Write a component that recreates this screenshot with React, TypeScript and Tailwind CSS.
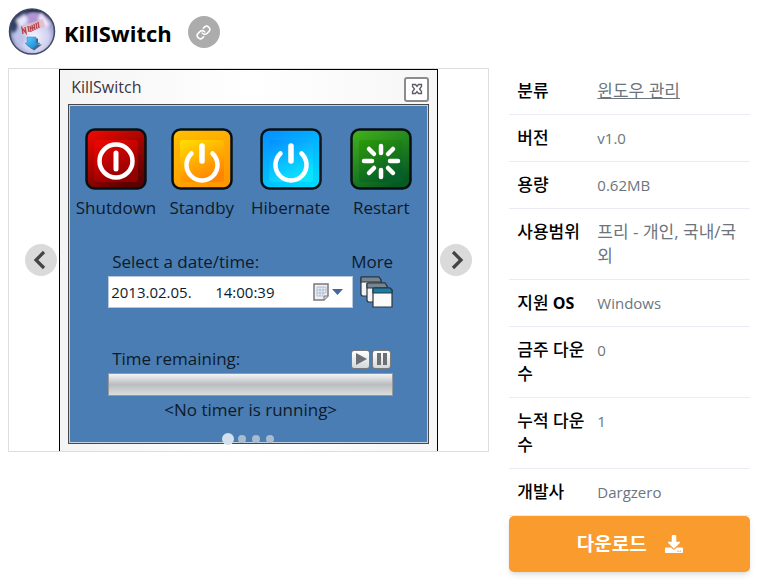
import type { ReactNode } from "react";
import { FaDownload } from "react-icons/fa";
import { Link } from "lucide-react";

const details = [
  { label: "분류", value: "윈도우 관리", href: "#" },
  { label: "버전", value: "v1.0" },
  { label: "용량", value: "0.62MB" },
  { label: "사용범위", value: "프리 - 개인, 국내/국외", korean: true },
  { label: "지원", suffix: "OS", value: "Windows" },
  { label: "금주 다운수", value: "0" },
  { label: "누적 다운수", value: "1" },
  { label: "개발사", value: "Dargzero" },
];

const AppLogo = () => (
  <svg viewBox="0 0 48 48" className="size-12 shrink-0" role="img" aria-label="KillSwitch logo">
    <defs>
      <radialGradient id="ball" cx="55%" cy="62%" r="58%">
        <stop offset="0" stopColor="#f4f3ff" />
        <stop offset="0.55" stopColor="#cfd0f0" />
        <stop offset="0.85" stopColor="#8990bb" />
        <stop offset="1" stopColor="#1d2a48" />
      </radialGradient>
      <linearGradient id="arrow" x1="0" y1="0" x2="1" y2="1">
        <stop offset="0" stopColor="#62d3ff" />
        <stop offset="1" stopColor="#0876cf" />
      </linearGradient>
      <filter id="soft">
        <feGaussianBlur stdDeviation="1.6" />
      </filter>
      <clipPath id="disc">
        <circle cx="24" cy="23.500" r="22" />
      </clipPath>
    </defs>
    <circle cx="24" cy="23.500" r="22.500" fill="url(#ball)" />
    <g clipPath="url(#disc)">
      <g filter="url(#soft)">
        <path d="M2 20C3 8 11 1 22 1l-5 7-7 9-4 10z" fill="#2f4169" />
        <path d="M20 6c8-4 19 2 22 10l-8-2-12 4-6-5z" fill="#b294d2" />
        <path d="M33 4l9 12-4 4-8-9z" fill="#f1e4ff" />
        <path d="M8 12l9-6 3 7-8 7z" fill="#e6e6fb" />
        <path d="M4 26l9-4 6 8-8 10z" fill="#bcc2ea" />
      </g>
    </g>
    <circle cx="24" cy="23.500" r="22.500" fill="none" stroke="#3f4963" strokeWidth="1.500" />
    <path d="M13 18l22-7 2 8-23 7z" fill="#e2bcc6" opacity="0.800" />
    <path
      d="M15 26l-1-6 4 5-1-6m4 5l-1-6m3 6l-1-6m3 5l-1-6m-1 3l4-1m0 3l-1-6m3 5l-1-6m3 5l-1-6"
      fill="none"
      stroke="#b5474f"
      strokeWidth="1.400"
    />
    <path d="M20 30h9v6h4l-8 6-8-6h3z" fill="#526178" transform="translate(1 0.500)" />
    <path d="M19 29h9v6h4l-8 6-7-6h2z" fill="url(#arrow)" stroke="#168ac7" strokeWidth="0.500" />
  </svg>
);

type TileProps = { id: string; from: string; to: string; innerFrom: string; innerTo: string; children: ReactNode };

const Tile = ({ id, from, to, innerFrom, innerTo, children }: TileProps) => (
  <svg viewBox="0 0 62 62" className="size-[62px]" aria-hidden="true">
    <defs>
      <linearGradient id={id} x1="0" y1="0" x2="0.600" y2="1">
        <stop offset="0" stopColor={from} />
        <stop offset="1" stopColor={to} />
      </linearGradient>
      <linearGradient id={id + "-inner"} x1="0" y1="0" x2="0.500" y2="1">
        <stop offset="0" stopColor={innerFrom} />
        <stop offset="1" stopColor={innerTo} />
      </linearGradient>
    </defs>
    <rect x="1.500" y="1.500" width="59" height="59" rx="8" fill={`url(#${id})`} stroke="#071015" strokeWidth="2.500" />
    <rect x="9" y="12" width="44" height="42" rx="3" fill={`url(#${id}-inner)`} />
    <g fill="none" stroke="#fff" strokeWidth="4.500" strokeLinecap="round">
      {children}
    </g>
  </svg>
);

const PowerGlyph = () => (
  <>
    <path d="M31 18v15" strokeWidth="5.500" />
    <path d="M20.500 25.500a15.500 15.500 0 1 0 21 0" />
  </>
);

const actions = [
  {
    name: "Shutdown",
    tile: (
      <Tile id="red" from="#f40a00" to="#5c0000" innerFrom="#f00500" innerTo="#920000">
        <circle cx="31" cy="33" r="16.500" />
        <path d="M31 25v16" strokeWidth="5" />
      </Tile>
    ),
  },
  {
    name: "Standby",
    tile: (
      <Tile id="yellow" from="#ffc000" to="#ff9800" innerFrom="#ffe000" innerTo="#ff8500">
        <PowerGlyph />
      </Tile>
    ),
  },
  {
    name: "Hibernate",
    tile: (
      <Tile id="blue" from="#078bff" to="#00d7ff" innerFrom="#078dff" innerTo="#0be4ff">
        <PowerGlyph />
      </Tile>
    ),
  },
  {
    name: "Restart",
    tile: (
      <Tile id="green" from="#43b51a" to="#075b22" innerFrom="#2d9b08" innerTo="#075f29">
        <path d="M31 18v7M31 42v7M14 33h8M40 33h8M19 21l5 5M43 21l-5 5M19 45l5-5M43 45l-5-5" />
      </Tile>
    ),
  },
];

const CloseIcon = () => (
  <svg viewBox="0 0 12 12" className="size-3" aria-hidden="true">
    <path
      d="M1.500 1.500h3L6 3.500l1.500-2h3v2L8.500 6l2 2.500v2h-3L6 8.500l-1.500 2h-3v-2L3.500 6l-2-2.500z"
      fill="#fff"
      stroke="#5a5d68"
      strokeWidth="1.300"
    />
  </svg>
);

const CalendarIcon = () => (
  <svg viewBox="0 0 30 18" className="h-[18px] w-[30px]" aria-hidden="true">
    <path d="M1 1h14v12l-4 4H1z" fill="#edf0f5" stroke="#7c767b" strokeWidth="1.500" />
    <path d="M4 4h9M4 7h9M4 10h9M4 13h6M4 4v9M7 4v9M10 4v9M13 4v6" stroke="#a5b3ca" strokeWidth="0.800" />
    <path d="M11 17v-4h4" fill="#d6d5da" stroke="#7c767b" />
    <path d="M19 6h11l-5.500 6z" fill="#46679d" />
  </svg>
);

const WindowsIcon = () => (
  <svg viewBox="0 0 34 32" className="h-8 w-[34px]" aria-hidden="true">
    <g stroke="#2b3640" strokeWidth="1.200">
      <path d="M2 2q0-1 1-1h17l2 3v16H4q-2 0-2-2z" fill="#f2f3f4" />
      <path d="M2 2q0-1 1-1h17l2 3v2H2z" fill="#76858f" />
      <path d="M8 8q0-1 1-1h17l2 3v16H10q-2 0-2-2z" fill="#f2f3f4" />
      <path d="M8 8q0-1 1-1h17l2 3v2H8z" fill="#76858f" />
      <path d="M14 13q0-1 1-1h16l2 2v17H14z" fill="#fafafa" />
      <path d="M14 13q0-1 1-1h16l2 2v3H14z" fill="#167ca8" />
    </g>
  </svg>
);

const smallButton =
  "flex size-[19px] items-center justify-center rounded-[3px] border border-[#777b80] bg-linear-to-b from-white to-[#d5d8da]";

const AppWindow = () => (
  <div className="flex h-full w-full max-w-[379px] flex-col border-x border-t border-black bg-linear-to-r from-[#f4f4f4] via-white to-[#f6f6f6] px-2 pb-[7px] font-['Open_Sans','Noto_Sans',sans-serif] text-[17px] text-[#0e1a2b]">
    <div className="flex h-[34px] items-center justify-between pl-[3px]">
      <span className="text-base text-[#3d3442]">KillSwitch</span>
      <button
        type="button"
        aria-label="Close"
        className="mt-1 flex size-[25px] items-center justify-center rounded-[3px] border-2 border-[#8b8b90] bg-white"
      >
        <CloseIcon />
      </button>
    </div>
    <div className="flex-1 border border-[#484848] bg-[#c3d2df] p-px">
      <div className="h-full bg-[#4a7db3] pt-[22px]">
        <div className="grid grid-cols-[88fr_84fr_94fr_88fr] px-0.5">
          {actions.map((action) => (
            <button key={action.name} type="button" className="flex flex-col items-center gap-1.5 leading-6">
              {action.tile}
              {action.name}
            </button>
          ))}
        </div>

        <div className="mt-[30px] pr-[34px] pl-[38px] leading-6">
          <div className="flex justify-between pl-1">
            <label htmlFor="timer-date">Select a date/time:</label>
            <span>More</span>
          </div>
          <div className="mt-0.5 flex justify-between">
            <div className="flex h-8 w-[245px] items-center border border-[#b9c9da] bg-white pl-0.5 text-[15px]">
              <input id="timer-date" defaultValue="2013.02.05." className="w-[104px] outline-none" />
              <input aria-label="Time" defaultValue="14:00:39" className="w-[98px] outline-none" />
              <button type="button" aria-label="Open calendar">
                <CalendarIcon />
              </button>
            </div>
            <button type="button" aria-label="More">
              <WindowsIcon />
            </button>
          </div>

          <div className="mt-[39px] flex items-center justify-between pr-0.5 pl-1">
            <span id="remaining">Time remaining:</span>
            <div className="flex gap-0.5">
              <button type="button" aria-label="Play" className={smallButton}>
                <svg viewBox="0 0 14 14" className="size-3.5">
                  <path d="M2 1l11 6-11 6z" fill="#6b7076" />
                </svg>
              </button>
              <button type="button" aria-label="Pause" className={smallButton}>
                <svg viewBox="0 0 14 14" className="size-3.5">
                  <path d="M2 1h4v12H2zM8 1h4v12H8z" fill="#6b7076" />
                </svg>
              </button>
            </div>
          </div>
          <div
            role="progressbar"
            aria-labelledby="remaining"
            aria-valuenow={0}
            className="mt-0.5 h-[23px] border border-[#96989b] bg-linear-to-b from-[#f3f4f4] via-[#b9bdc0] to-[#dcdddd]"
          />
          <p className="mt-0.5 text-center">&lt;No timer is running&gt;</p>
        </div>
      </div>
    </div>
  </div>
);

const Chevron = ({ d }: { d: string }) => (
  <svg viewBox="0 0 32 32" className="size-8" aria-hidden="true">
    <path d={d} fill="none" stroke="#444" strokeWidth="3.200" />
  </svg>
);

const Carousel = () => (
  <div className="min-w-0 flex-[2]">
    <div className="relative flex h-96 justify-center border border-[#dedede]">
      <AppWindow />
      <button
        type="button"
        aria-label="Previous"
        className="absolute top-1/2 left-4 size-8 -translate-y-1/2 rounded-full bg-[#dadada]"
      >
        <Chevron d="M19 8l-8 8 8 8" />
      </button>
      <button
        type="button"
        aria-label="Next"
        className="absolute top-1/2 right-4 size-8 -translate-y-1/2 rounded-full bg-[#dadada]"
      >
        <Chevron d="M13 8l8 8-8 8" />
      </button>
      <div className="absolute inset-x-0 bottom-2 flex items-center justify-center gap-1.5">
        <button type="button" aria-label="Slide 1" className="size-2 scale-150 rounded-full bg-[#d3e0ee]" />
        <button type="button" aria-label="Slide 2" className="size-2 rounded-full bg-[#a9bbce]" />
        <button type="button" aria-label="Slide 3" className="size-2 rounded-full bg-[#a9bbce]" />
        <button type="button" aria-label="Slide 4" className="size-2 rounded-full bg-[#a9bbce]" />
      </div>
    </div>
  </div>
);

const Details = () => (
  <div className="min-w-0 flex-1">
    <table className="w-full table-fixed text-left leading-6">
      <tbody>
        {details.map(({ label, suffix, value, href, korean }) => (
          <tr key={label} className="border-b border-[#e9ecf5] align-top">
            <th scope="row" className="w-20 py-[11px] pl-2 text-[17px] font-medium text-black">
              {label}
              {suffix && <b className="text-base font-bold"> {suffix}</b>}
            </th>
            <td
              className={
                href || korean
                  ? "px-2 py-[11px] text-[17px] text-[#6c757d]"
                  : "px-2 py-[11px] text-[15px] text-[#6c757d]"
              }
            >
              {href ? (
                <a href={href} className="underline">
                  {value}
                </a>
              ) : (
                value
              )}
            </td>
          </tr>
        ))}
      </tbody>
    </table>
    <button
      type="button"
      className="flex h-14 w-full items-center justify-center gap-[18px] rounded-[5px] bg-[#f99b2d] text-[19px] font-bold text-white shadow-md"
    >
      다운로드
      <FaDownload className="size-[18px]" />
    </button>
  </div>
);

const App = () => {
  return (
    <main className="bg-white p-2 font-['Open_Sans','Noto_Sans_CJK_KR',sans-serif]">
      <header className="mb-3 flex h-12 items-center">
        <AppLogo />
        <h1 className="mt-0.5 ml-2 text-[22px] font-bold text-black">KillSwitch</h1>
        <button
          type="button"
          aria-label="Copy link"
          className="ml-4 flex size-8 items-center justify-center rounded-full bg-[#acacac] text-white"
        >
          <Link className="size-[15px]" strokeWidth={2.5} />
        </button>
      </header>
      <div className="flex items-start gap-5">
        <Carousel />
        <Details />
      </div>
    </main>
  );
};

export default App;
